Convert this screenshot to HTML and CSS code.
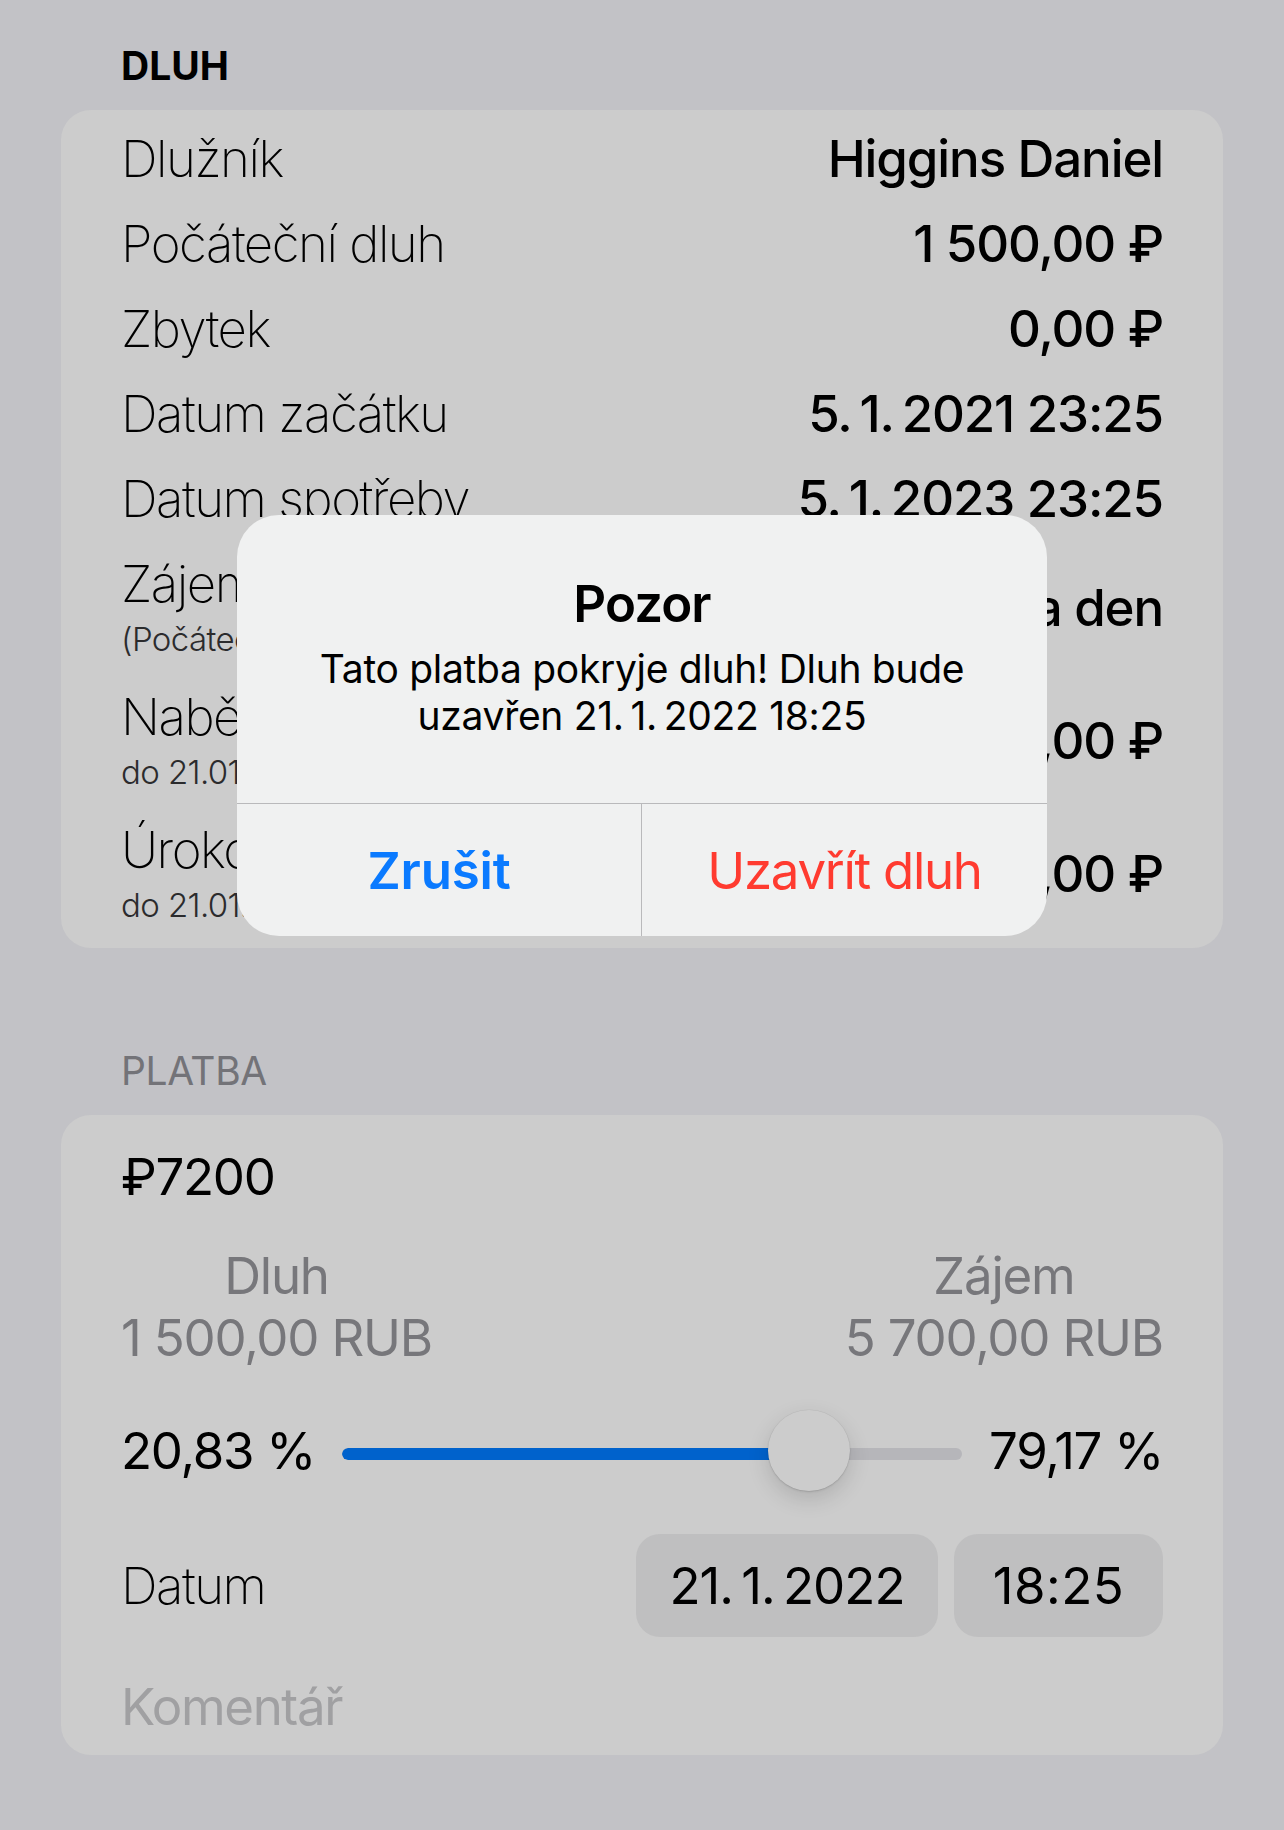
FILE: index.html
```html
<!DOCTYPE html>
<html lang="cs">
<head>
<meta charset="utf-8">
<title>Dluh</title>
<link rel="stylesheet" href="styles.css">
</head>
<body>
<main class="screen">
  <section class="group">
    <h2 class="group-title group-title--strong">DLUH</h2>
    <div class="card card--details">
      <div class="row"><span class="label">Dlužník</span><span class="value">Higgins Daniel</span></div>
      <div class="row"><span class="label">Počáteční dluh</span><span class="value">1&nbsp;500,00 ₽</span></div>
      <div class="row"><span class="label">Zbytek</span><span class="value">0,00 ₽</span></div>
      <div class="row"><span class="label">Datum začátku</span><span class="value">5.&#8201;1.&#8201;2021 23:25</span></div>
      <div class="row"><span class="label">Datum spotřeby</span><span class="value">5.&#8201;1.&#8201;2023 23:25</span></div>
      <div class="row row--two">
        <div class="label-stack"><span class="label">Zájem</span><span class="sublabel">(Počáteční dluh)</span></div>
        <span class="value">0,50 % za den</span>
      </div>
      <div class="row row--two">
        <div class="label-stack"><span class="label">Naběhlý úrok</span><span class="sublabel">do 21.01.2022</span></div>
        <span class="value">5&nbsp;700,00 ₽</span>
      </div>
      <div class="row row--two">
        <div class="label-stack"><span class="label">Úroková sazba</span><span class="sublabel">do 21.01.2022</span></div>
        <span class="value">5&nbsp;700,00 ₽</span>
      </div>
    </div>
  </section>

  <section class="group group--payment">
    <h2 class="group-title">PLATBA</h2>
    <div class="card card--payment">
      <div class="amount">₽7200</div>
      <div class="split">
        <div class="split-col"><span>Dluh</span><span>1&nbsp;500,00 RUB</span></div>
        <div class="split-col"><span>Zájem</span><span>5&nbsp;700,00 RUB</span></div>
      </div>
      <div class="ratio">
        <span class="ratio-value">20,83 %</span>
        <div class="slider" style="--value: 0.7917">
          <div class="slider-track"><div class="slider-fill"></div></div>
          <div class="slider-thumb"></div>
        </div>
        <span class="ratio-value">79,17 %</span>
      </div>
      <div class="date-row">
        <span class="label">Datum</span>
        <div class="pickers">
          <span class="pill pill--date">21.&#8201;1.&#8201;2022</span>
          <span class="pill pill--time">18:25</span>
        </div>
      </div>
      <div class="comment">Komentář</div>
    </div>
  </section>
</main>

<div class="alert" role="alertdialog">
  <div class="alert-body">
    <div class="alert-title">Pozor</div>
    <div class="alert-message">Tato platba pokryje dluh! Dluh bude uzavřen 21.&#8201;1.&#8201;2022 18:25</div>
  </div>
  <div class="alert-actions">
    <button class="alert-btn alert-btn--cancel">Zrušit</button>
    <button class="alert-btn alert-btn--destructive">Uzavřít dluh</button>
  </div>
</div>
</body>
</html>
```

FILE: styles.css
```css
* { box-sizing: border-box; }

html, body {
  margin: 0;
  padding: 0;
}

body {
  background: #c2c2c6;
  font-family: "Inter", "Noto Sans", "DejaVu Sans", sans-serif;
  color: #000;
  width: 1284px;
  height: 1830px;
  position: relative;
  overflow: hidden;
  letter-spacing: -1.1px;
}

.screen {
  padding: 42px 61px 0;
  display: flex;
  flex-direction: column;
}

.group-title {
  margin: 0 0 21px;
  padding-left: 60px;
  font-size: 39px;
  line-height: 47px;
  font-weight: 400;
  color: #737378;
  letter-spacing: -0.4px;
}

.group-title--strong {
  font-weight: 700;
  color: #000;
  letter-spacing: 0;
}

.group--payment {
  margin-top: 99px;
}

.card {
  background: #cccccc;
  border-radius: 30px;
  padding: 0 60px;
}

.card--details {
  padding-top: 6px;
  padding-bottom: 8px;
}

.row {
  display: flex;
  justify-content: space-between;
  align-items: center;
  min-height: 85px;
  padding: 12px 0;
}

.row--two {
  min-height: 133px;
}

.label-stack {
  display: flex;
  flex-direction: column;
}

.label {
  font-size: 51px;
  line-height: 61px;
  font-weight: 220;
  letter-spacing: -1.5px;
  white-space: nowrap;
}

.sublabel {
  font-size: 33px;
  line-height: 45px;
  margin-top: 3px;
  font-weight: 300;
  color: #2b2b2d;
  white-space: nowrap;
  letter-spacing: -0.6px;
}

.value {
  font-size: 51px;
  line-height: 61px;
  font-weight: 500;
  letter-spacing: -1.1px;
  white-space: nowrap;
}

/* payment card */
.card--payment {
  padding-top: 31px;
  padding-bottom: 18px;
}

.amount {
  font-size: 51px;
  line-height: 61px;
  font-weight: 400;
  letter-spacing: -1.3px;
}

.split {
  margin-top: 38px;
  display: flex;
  justify-content: space-between;
  color: #77777b;
}

.split-col {
  display: flex;
  flex-direction: column;
  align-items: center;
  font-size: 51px;
  line-height: 62px;
  letter-spacing: -1.2px;
}

.ratio {
  margin-top: 41px;
  height: 81px;
  display: flex;
  align-items: center;
  gap: 27px;
}

.ratio-value {
  font-size: 51px;
  line-height: 61px;
  letter-spacing: -1.3px;
  white-space: nowrap;
}

.slider {
  --thumb: 82px;
  flex: 1;
  position: relative;
  height: 81px;
  display: flex;
  align-items: center;
}

.slider-track {
  width: 100%;
  height: 12px;
  margin-top: 7px;
  border-radius: 6px;
  background: #b6b6ba;
  overflow: hidden;
}

.slider-fill {
  height: 100%;
  width: calc(var(--thumb) / 2 + (100% - var(--thumb)) * var(--value));
  background: #0062cc;
  border-radius: 6px 0 0 6px;
}

.slider-thumb {
  position: absolute;
  top: 0;
  left: calc((100% - var(--thumb)) * var(--value));
  width: var(--thumb);
  height: 81px;
  border-radius: 50%;
  background: #cccccc;
  box-shadow: 0 8px 22px rgba(0, 0, 0, 0.14), 0 1px 2px rgba(0, 0, 0, 0.12), 0 0 0 0.5px rgba(0, 0, 0, 0.05);
}

.date-row {
  margin-top: 43px;
  display: flex;
  justify-content: space-between;
  align-items: center;
}

.pickers {
  display: flex;
  gap: 16px;
}

.pill {
  height: 103px;
  display: flex;
  align-items: center;
  justify-content: center;
  padding: 0;
  border-radius: 24px;
  background: #bfbfc0;
  font-size: 51px;
  line-height: 61px;
  letter-spacing: -1px;
}

.pill--date {
  width: 302px;
}

.pill--time {
  width: 209px;
  letter-spacing: 0.5px;
}

.comment {
  margin-top: 39px;
  font-size: 51px;
  line-height: 61px;
  letter-spacing: -1.4px;
  color: #a0a0a2;
}

/* alert */
.alert {
  position: absolute;
  top: 515px;
  left: 237px;
  width: 810px;
  border-radius: 42px;
  background: #f0f1f1;
  overflow: hidden;
  letter-spacing: 0;
}

.alert-body {
  padding: 58px 48px 64px;
  text-align: center;
  height: 288px;
}

.alert-title {
  font-size: 51px;
  line-height: 61px;
  font-weight: 600;
  letter-spacing: -0.9px;
}

.alert-message {
  margin-top: 11px;
  font-size: 39px;
  line-height: 47px;
  font-weight: 400;
  letter-spacing: -0.3px;
}

.alert-actions {
  display: grid;
  grid-template-columns: 1fr 1fr;
  border-top: 1px solid #b9b9bb;
  height: 133px;
}

.alert-btn {
  border: 0;
  background: transparent;
  font-family: inherit;
  font-size: 51px;
  line-height: 61px;
  padding: 0;
  margin: 0;
  letter-spacing: -0.2px;
}

.alert-btn--cancel {
  color: #0a7aff;
  font-weight: 600;
  border-right: 1px solid #b9b9bb;
}

.alert-btn--destructive {
  color: #ff3b30;
  font-weight: 400;
  letter-spacing: -1.3px;
}
```
